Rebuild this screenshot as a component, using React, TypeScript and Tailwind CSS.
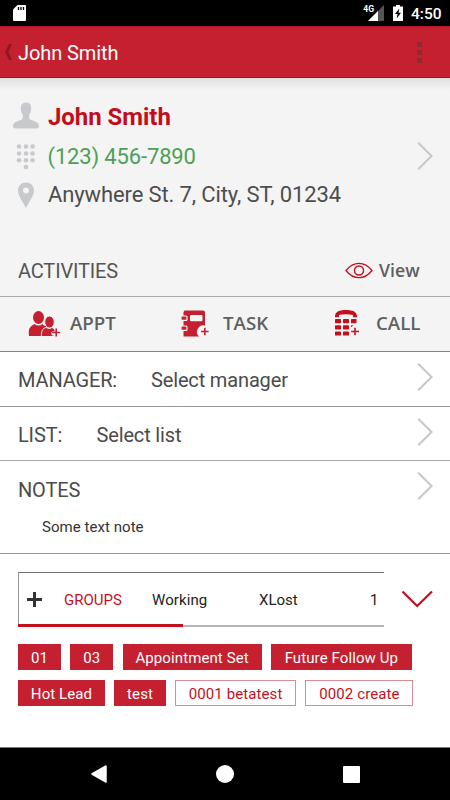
import type { ReactNode } from 'react'

const SELECTED_TAGS = [
  ['01', 'w-[43px]'],
  ['03', 'w-[43px]'],
  ['Appointment Set', 'w-[139px]'],
  ['Future Follow Up', 'w-[141px]'],
  ['Hot Lead', 'w-[87px]'],
  ['test', 'w-[51.5px]'],
]

const OTHER_TAGS = [
  ['0001 betatest', 'w-[121px]'],
  ['0002 create', 'w-[108px]'],
]

function Chevron() {
  return (
    <svg className="h-7 w-4 shrink-0" viewBox="0 0 16 28" fill="none" aria-hidden="true">
      <path d="M1.2 0.8 L14.6 14 L1.2 27.2" stroke="#c5c6ca" strokeWidth="2" />
    </svg>
  )
}

function StatusBar() {
  return (
    <div className="flex h-[26px] bg-black text-white">
      <svg className="ml-[13px] mt-[5px] h-4 w-[13px]" viewBox="0 0 13 16" aria-hidden="true">
        <path d="M4.5 0H12q1 0 1 1v14q0 1-1 1H1q-1 0-1-1V4.5Z" fill="white" />
        <path d="M5.5 2v3M8 2v3M10.5 2v3" stroke="black" strokeWidth="1.3" />
      </svg>
      <span className="ml-auto mt-[4px] text-[8.5px] leading-[10px] font-bold">4G</span>
      <svg className="-ml-[6px] mt-[5px] h-4 w-4" viewBox="0 0 16 16" aria-hidden="true">
        <path d="M0 16 16 0V16Z" fill="#555" />
        <path d="M0 16 10 6V16Z" fill="white" />
      </svg>
      <svg className="ml-[9px] mt-[5px] h-4 w-[10px]" viewBox="0 0 10 16" aria-hidden="true">
        <path d="M3 0h4v1.5h3V16H0V1.5h3Z" fill="white" />
        <path d="M6.3 3.5 2 9h2.5L3.7 13.5 8 7.7H5.5Z" fill="black" />
      </svg>
      <span className="ml-[8px] mr-[8px] mt-[4px] w-[31px] text-[15.5px] leading-[20px] font-medium whitespace-nowrap">
        4:50
      </span>
    </div>
  )
}

function AppBar() {
  return (
    <header className="flex h-[52px] items-center border-t border-b border-t-[#b51a27] border-b-[#a80f1c] bg-[#c4202f]">
      <svg className="ml-[4px] h-4 w-[9px]" viewBox="0 0 9 16" aria-hidden="true">
        <path d="M8 0H5L1 8l4 8h3L4.500 8Z" fill="#8e1924" />
      </svg>
      <h1 className="ml-[5px] mt-[2px] text-[20px] leading-6 tracking-[-0.1px] text-white">John Smith</h1>
      <div className="ml-auto mr-[28px] flex flex-col gap-[3px]">
        <span className="h-[5px] w-[5px] bg-[#8e2a34]" />
        <span className="h-[5px] w-[5px] bg-[#8e2a34]" />
        <span className="h-[5px] w-[5px] bg-[#8e2a34]" />
      </div>
    </header>
  )
}

function ContactCard() {
  return (
    <section className="flex h-[154px] justify-between bg-linear-to-b from-[#e0e0e0] to-[#f4f4f4] to-[12px] pr-[17px] pl-[12px]">
      <div className="flex flex-col pt-[20px]">
        <div className="flex h-[39px] items-center">
          <svg className="-mt-[5px] h-[27px] w-[28px]" viewBox="0 0 28 27" fill="#c8c9cd" aria-hidden="true">
            <path d="M14 .5c3.500 0 5.200 2.200 5.200 5.500 0 2.500-.8 5-2 7v3c0 1 .7 1.400 2 1.900 4.200 1.500 7.800 2.700 7.800 6.100 0 1.800-1 2.500-3 2.500H4c-2 0-3-.7-3-2.500 0-3.400 3.600-4.600 7.800-6.100 1.300-.5 2-1 2-1.900v-3c-1.200-2-2-4.500-2-7C8.800 2.700 10.500.5 14 .5Z" />
          </svg>
          <span className="-mt-[2px] ml-2 text-[24px] leading-7 font-bold tracking-[-0.05px] text-[#c40d1a]">
            John Smith
          </span>
        </div>
        <div className="flex h-[39px] items-center">
          <svg className="h-[26px] w-[28px]" viewBox="0 0 28 26" fill="#c8c9cd" aria-hidden="true">
            {[7, 14, 20.5].map((x) =>
              [2.5, 9.5, 16.2].map((y) => <circle key={`${x}-${y}`} cx={x} cy={y} r="2.300" />),
            )}
            <circle cx="14" cy="23" r="2.300" />
          </svg>
          <span className="ml-[7.5px] text-[22px] leading-7 tracking-[-0.15px] text-[#4f9f55]">
            (123) 456-7890
          </span>
        </div>
        <div className="flex h-[38px] items-center">
          <svg className="h-[26px] w-[28px]" viewBox="0 0 28 26" aria-hidden="true">
            <path
              d="M14 .5c-4.500 0-8 3.300-8 7.800C6 14 11 20 14 26c3-6 8-12 8-17.700C22 3.800 18.500.5 14 .5Zm0 5a3 3 0 1 1 0 6 3 3 0 0 1 0-6Z"
              fill="#c8c9cd"
            />
          </svg>
          <span className="ml-2 text-[22px] leading-7 tracking-[-0.12px] text-[#4d4d4d]">
            Anywhere St. 7, City, ST, 01234
          </span>
        </div>
      </div>
      <div className="mt-[64px]">
        <Chevron />
      </div>
    </section>
  )
}

function ApptIcon() {
  return (
    <svg className="h-[27px] w-[33px]" viewBox="0 0 33 27" aria-hidden="true">
      <g fill="#c4202f">
        <ellipse cx="10.500" cy="6.500" rx="5.500" ry="6.500" />
        <path d="M6.500 13q4 3 8 0 .5 1.200 2 1.700h4V25H1c-.8-7.500.7-9.500 5.500-12Z" />
      </g>
      <g fill="#c4202f" stroke="#f4f4f4">
        <path d="M18 16.500q3 2 6 0 2.500.6 3 2.500v2h-3v3h2v1.500H13.500c-.3-5.500 1-8 4.500-9Z" />
        <ellipse cx="21.500" cy="11" rx="4.800" ry="6" />
      </g>
      <path d="M28.200 17.500v8M24.200 21.500h8" stroke="#c4202f" strokeWidth="1.600" />
    </svg>
  )
}

function TaskIcon() {
  return (
    <svg className="h-[28px] w-[28px]" viewBox="0 0 28 28" aria-hidden="true">
      <path d="M3.500 .5H22q2 0 2 2V15.500a6.500 6.500 0 0 0-6 11H2.500V2Z" fill="#c4202f" />
      <rect x="9" y="5" width="12.500" height="6.200" rx="1.200" fill="#f4f4f4" />
      <g fill="#c4202f" stroke="#f4f4f4" strokeWidth="1.200">
        <rect x="0" y="6" width="6" height="4.400" rx="1" />
        <rect x="0" y="16" width="6" height="4.400" rx="1" />
      </g>
      <path d="M23.800 17.700v7.600M20 21.500h7.600" stroke="#c4202f" strokeWidth="1.600" />
    </svg>
  )
}

function CallIcon() {
  return (
    <svg className="h-[28px] w-[26px]" viewBox="0 0 26 28" fill="#c4101d" aria-hidden="true">
      <path d="M0 6.500C0 2 4 0 11 0s11 2 11 6.500V7.200h-4V5q-7-1.500-14 0v2.200H0Z" />
      <rect y="9" width="6" height="4.200" rx=".6" />
      <rect x="8" y="9" width="6" height="4.200" rx=".6" />
      <rect x="16" y="9" width="5.500" height="4.200" rx=".6" />
      <rect y="15.200" width="6" height="4.200" rx=".6" />
      <rect x="8" y="15.200" width="6" height="4.200" rx=".6" />
      <path d="M16 15.200h2.500l-2.500 2Z" />
      <rect y="21.400" width="6" height="4.200" rx=".6" />
      <rect x="8" y="21.400" width="6" height="4.200" rx=".6" />
      <path d="M20 17.700v7.600M16.200 21.500h7.800" stroke="#c4101d" strokeWidth="1.600" />
    </svg>
  )
}

function Activities() {
  return (
    <section className="bg-[#f4f4f4] text-[#555]">
      <div className="flex h-[65px] border-b border-[#aaa] pt-[27px] pl-[18px]">
        <h2 className="w-[327px] text-[20px] leading-6 tracking-[-0.15px]">ACTIVITIES</h2>
        <svg className="mt-[3px] h-[17px] w-[28px]" viewBox="0 0 29 17" fill="none" stroke="#c4101d" aria-hidden="true">
          <path d="M1 8.500Q7 1 14.500 1T28 8.500Q22 16 14.500 16T1 8.500Z" strokeWidth="1.300" />
          <circle cx="14.500" cy="8.500" r="4.700" strokeWidth="1.500" />
        </svg>
        <span className="-mt-px ml-[6px] font-['Open_Sans',sans-serif] text-[17.7px] leading-6 font-semibold text-[#606060]">
          View
        </span>
      </div>
      <div className="flex h-[55px] items-center border-b border-[#858585] pl-[28px] font-['Open_Sans',sans-serif] text-[18.7px] leading-6 font-semibold text-[#606060]">
        <ApptIcon />
        <span className="-mt-[2px] ml-[9px] w-[111px]">APPT</span>
        <TaskIcon />
        <span className="-mt-[2px] ml-[14px] w-[112px]">TASK</span>
        <CallIcon />
        <span className="-mt-[2px] ml-[15px]">CALL</span>
      </div>
    </section>
  )
}

function Row({ children }: { children: ReactNode }) {
  return (
    <div className="flex h-10 justify-between pt-[11px] pr-[17px] pl-[18px] text-[20px] leading-6 tracking-[-0.15px] text-[#4b4b4b]">
      <div className="flex pt-[5px]">{children}</div>
      <Chevron />
    </div>
  )
}

function Groups() {
  return (
    <section className="pt-[18px] pr-[14px] pl-[18px]">
      <div className="flex items-center">
        <div className="relative flex h-[55px] w-[366px] shrink-0 items-center border-t border-b-2 border-l border-t-[#747478] border-b-[#b5b5b5] border-l-[#999] text-[15px] leading-6">
          <svg className="ml-[8px] h-[15px] w-[15px]" viewBox="0 0 15 15" aria-hidden="true">
            <path d="M7.500 0v15M0 7.500h15" stroke="#333" strokeWidth="3" />
          </svg>
          <span className="mt-[2px] ml-[22px] w-[88px] text-[#c4101d]">GROUPS</span>
          <span className="mt-[2px] w-[107px] tracking-[0.1px] text-[#222]">Working</span>
          <span className="mt-[2px] w-[111px] text-[#222]">XLost</span>
          <span className="mt-[2px] text-[#222]">1</span>
          <span className="absolute -bottom-[2px] -left-px h-[3px] w-[165px] bg-[#c4101d]" />
        </div>
        <svg className="-mt-px ml-[18px] h-[18px] w-[32px] shrink-0" viewBox="0 0 32 18" fill="none" aria-hidden="true">
          <path d="M.5 1.500 15.200 16 30 1.500" stroke="#c4101d" strokeWidth="2.200" />
        </svg>
      </div>
      <div className="mt-[17px] flex flex-wrap gap-x-[9.3px] gap-y-[10px] text-[15px] leading-6 tracking-[0.1px]">
        {SELECTED_TAGS.map(([label, width]) => (
          <span key={label} className={`${width} h-[26px] bg-[#c4202f] pt-[2px] text-center whitespace-nowrap text-white`}>
            {label}
          </span>
        ))}
        {OTHER_TAGS.map(([label, width]) => (
          <span
            key={label}
            className={`${width} h-[26px] border border-[#dc8b92] pt-px text-center whitespace-nowrap text-[#c4101d]`}
          >
            {label}
          </span>
        ))}
      </div>
    </section>
  )
}

function NavBar() {
  return (
    <nav className="mt-auto flex h-[53px] items-center justify-between border-t border-[#777] bg-black pr-[90px] pl-[91px]">
      <svg className="h-[18px] w-4" viewBox="0 0 16 18" aria-hidden="true">
        <path d="M1 9 15 1v16Z" fill="white" stroke="white" strokeWidth="1.500" strokeLinejoin="round" />
      </svg>
      <span className="h-[18px] w-[18px] rounded-full bg-white" />
      <span className="h-[17px] w-[17px] rounded-[1px] bg-white" />
    </nav>
  )
}

export default function App() {
  return (
    <div className="flex h-[800px] w-[450px] flex-col overflow-hidden bg-white font-['Roboto',sans-serif]">
      <StatusBar />
      <AppBar />
      <ContactCard />
      <Activities />
      <div className="h-[55px] border-b border-[#999]">
        <Row>
          <span className="w-[133px]">MANAGER:</span>
          <span>Select manager</span>
        </Row>
      </div>
      <div className="h-[54px] border-b border-[#aaa]">
        <Row>
          <span className="w-[78.5px]">LIST:</span>
          <span>Select list</span>
        </Row>
      </div>
      <div className="h-[93px] border-b border-[#999]">
        <Row>
          <span className="pt-px">NOTES</span>
        </Row>
        <p className="mt-[16px] pl-[42px] text-[15px] leading-5 tracking-[0.05px] text-[#333]">Some text note</p>
      </div>
      <Groups />
      <NavBar />
    </div>
  )
}
